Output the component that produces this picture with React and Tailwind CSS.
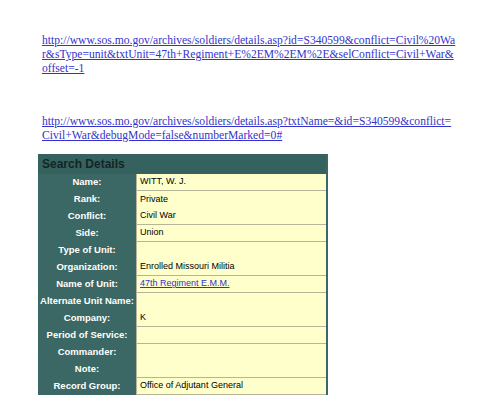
const rows = [
  { label: "Name:", value: "WITT, W. J.", line: true },
  { label: "Rank:", value: "Private", line: false },
  { label: "Conflict:", value: "Civil War", line: true },
  { label: "Side:", value: "Union", line: true },
  { label: "Type of Unit:", value: "", line: false },
  { label: "Organization:", value: "Enrolled Missouri Militia", line: true },
  { label: "Name of Unit:", value: "47th Regiment E.M.M.", link: true, line: true },
  { label: "Alternate Unit Name:", value: "", line: false },
  { label: "Company:", value: "K", line: true },
  { label: "Period of Service:", value: "", line: true },
  { label: "Commander:", value: "", line: false },
  { label: "Note:", value: "", line: true },
  { label: "Record Group:", value: "Office of Adjutant General", line: true },
];

export default function App() {
  return (
    <div className="w-[500px] h-[397px] overflow-hidden bg-white">
      {/* Links */}
      <div className="pl-[42px] pt-[34px] font-['Liberation_Serif',serif] text-[11.6px] leading-[14px]">
        <a href="#" className="text-[#3333cc] underline">
          http://www.sos.mo.gov/archives/soldiers/details.asp?id=S340599&amp;conflict=Civil%20Wa<br />
          r&amp;sType=unit&amp;txtUnit=47th+Regiment+E%2EM%2EM%2E&amp;selConflict=Civil+War&amp;<br />
          offset=-1
        </a>
      </div>
      <div className="pl-[42px] pt-[39px] font-['Liberation_Serif',serif] text-[11.6px] leading-[14px]">
        <a href="#" className="text-[#3333cc] underline">
          http://www.sos.mo.gov/archives/soldiers/details.asp?txtName=&amp;id=S340599&amp;conflict=<br />
          Civil+War&amp;debugMode=false&amp;numberMarked=0#
        </a>
      </div>

      {/* Search Details table */}
      <div className="ml-[38px] mt-[11px] w-[290px] bg-[#3b6864] pr-[2px] font-['Liberation_Sans',Arial,sans-serif]">
        <div className="h-[20px] bg-[#35625f] pl-[4px] flex items-center text-[12px] font-bold text-[#142525]">
          Search Details
        </div>
        {rows.map((r) => (
          <div key={r.label} className="grid grid-cols-[98px_1fr] h-[17px]">
            <div className="flex items-center justify-center text-[9.5px] font-bold text-white whitespace-nowrap">
              {r.label}
            </div>
            <div
              className={
                "flex items-center pl-[3px] bg-[#ffffcc] border-l border-[#b5b59a] text-[9px] text-black " +
                (r.line ? "border-b" : "")
              }
            >
              {r.link ? (
                <a href="#" className="text-[#3333cc] underline">{r.value}</a>
              ) : (
                r.value
              )}
            </div>
          </div>
        ))}
      </div>
    </div>
  );
}
